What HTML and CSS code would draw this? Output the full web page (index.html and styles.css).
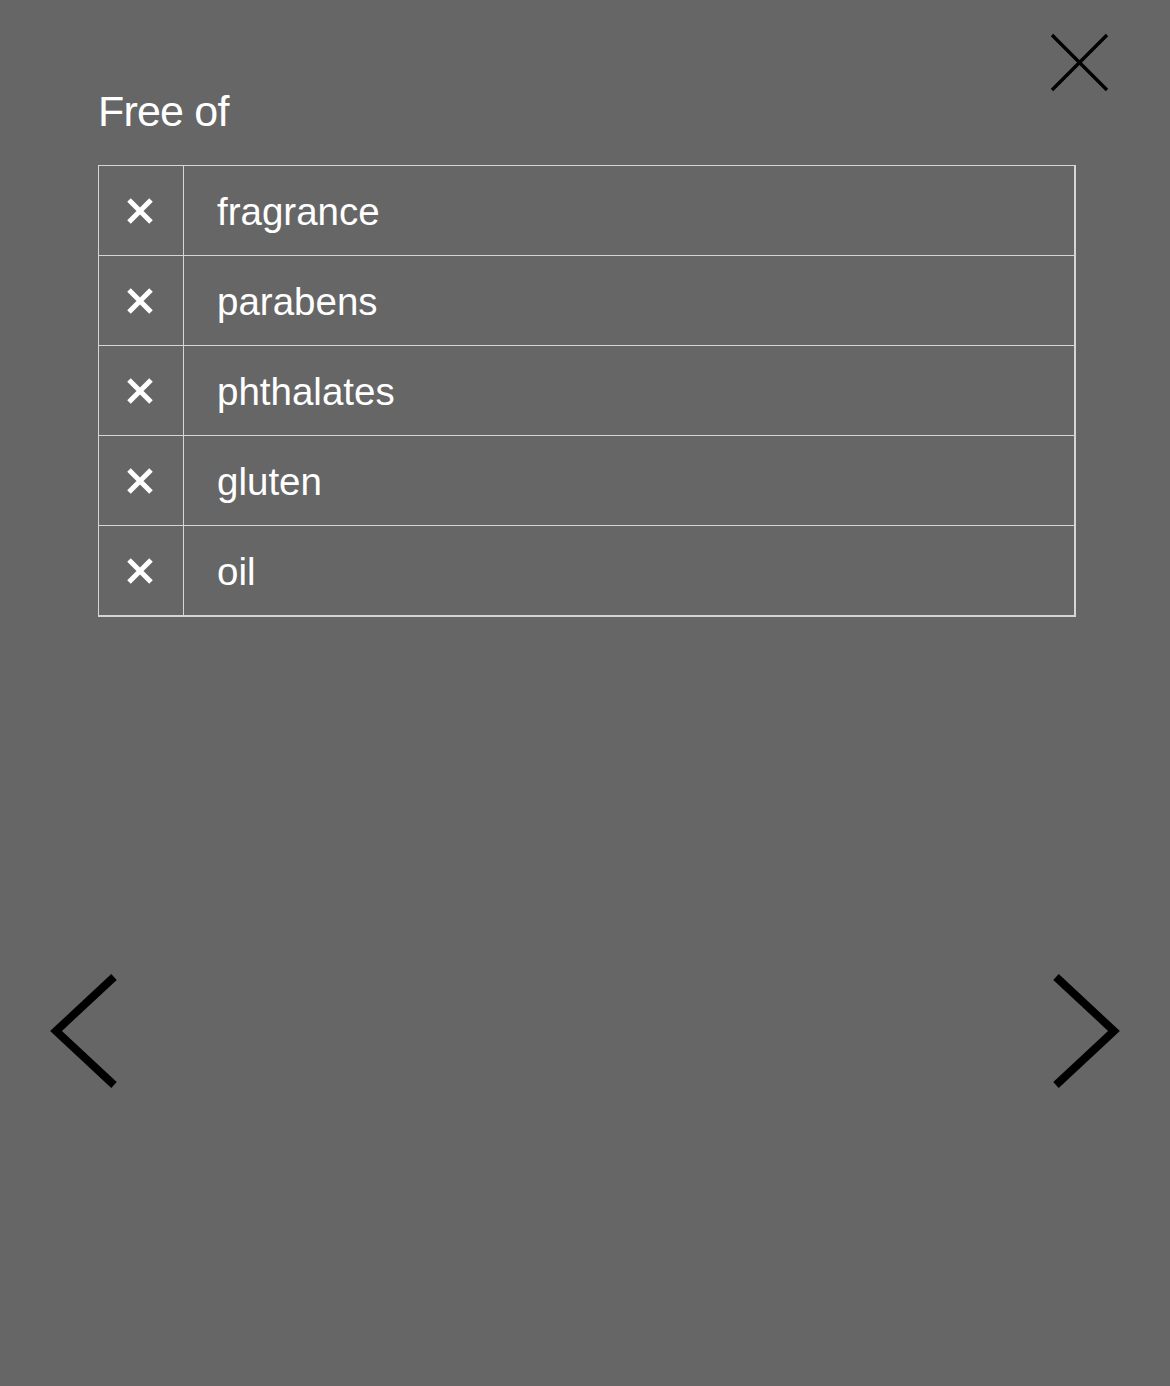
FILE: index.html
```html
<!DOCTYPE html>
<html lang="en">
<head>
<meta charset="utf-8">
<title>Free of</title>
<link rel="stylesheet" href="styles.css">
</head>
<body>
<div class="modal">
  <button class="close" aria-label="Close">
    <svg width="60" height="60" viewBox="0 0 60 60"><path d="M3 3 L58 58 M58 3 L3 58" stroke="#000" stroke-width="3.4" fill="none"/></svg>
  </button>
  <section class="content">
    <h2 class="title">Free of</h2>
    <div class="table">
      <div class="row"><div class="mark"><svg width="28" height="28" viewBox="0 0 28 28"><path d="M3 3 L25 25 M25 3 L3 25" stroke="#fff" stroke-width="5" fill="none"/></svg></div><div class="label">fragrance</div></div>
      <div class="row"><div class="mark"><svg width="28" height="28" viewBox="0 0 28 28"><path d="M3 3 L25 25 M25 3 L3 25" stroke="#fff" stroke-width="5" fill="none"/></svg></div><div class="label">parabens</div></div>
      <div class="row"><div class="mark"><svg width="28" height="28" viewBox="0 0 28 28"><path d="M3 3 L25 25 M25 3 L3 25" stroke="#fff" stroke-width="5" fill="none"/></svg></div><div class="label">phthalates</div></div>
      <div class="row"><div class="mark"><svg width="28" height="28" viewBox="0 0 28 28"><path d="M3 3 L25 25 M25 3 L3 25" stroke="#fff" stroke-width="5" fill="none"/></svg></div><div class="label">gluten</div></div>
      <div class="row"><div class="mark"><svg width="28" height="28" viewBox="0 0 28 28"><path d="M3 3 L25 25 M25 3 L3 25" stroke="#fff" stroke-width="5" fill="none"/></svg></div><div class="label">oil</div></div>
    </div>
  </section>
  <button class="nav prev" aria-label="Previous">
    <svg width="80" height="120" viewBox="0 0 80 120"><path d="M68 4 L10 58 L68 112" stroke="#000" stroke-width="8" fill="none" stroke-linejoin="miter"/></svg>
  </button>
  <button class="nav next" aria-label="Next">
    <svg width="80" height="120" viewBox="0 0 80 120"><path d="M6 4 L64 58 L6 112" stroke="#000" stroke-width="8" fill="none" stroke-linejoin="miter"/></svg>
  </button>
</div>
</body>
</html>
```
FILE: styles.css
```css
html, body {
  margin: 0;
  padding: 0;
  background: #666666;
}
body {
  font-family: "Liberation Sans", Arial, Helvetica, sans-serif;
  color: #ffffff;
}
.modal {
  position: relative;
  width: 1170px;
  height: 1386px;
  overflow: hidden;
}
.content {
  padding: 84px 95px 0 98px;
}
.title {
  margin: 0;
  font-weight: normal;
  font-size: 43px;
  letter-spacing: -0.8px;
  line-height: 54px;
  height: 54px;
}
.table {
  margin-top: 27px;
  width: 975px;
  border: 1px solid #d6d6d6;
  border-bottom-width: 2px;
  border-right-width: 2px;
}
.row {
  display: flex;
  height: 89px;
  border-top: 1px solid #d6d6d6;
}
.row:first-child {
  border-top: none;
}
.mark {
  width: 84px;
  flex: none;
  border-right: 1px solid #d6d6d6;
  display: flex;
  align-items: center;
  justify-content: center;
}
.mark svg {
  display: block;
  margin-right: 2px;
}
.label {
  display: flex;
  align-items: center;
  padding-left: 33px;
  padding-top: 2px;
  font-size: 38.5px;
}
button {
  background: none;
  border: none;
  padding: 0;
  margin: 0;
  cursor: pointer;
}
button svg {
  display: block;
}
.close {
  position: absolute;
  left: 1049px;
  top: 32px;
}
.nav {
  position: absolute;
  top: 973px;
}
.prev {
  left: 46px;
}
.next {
  left: 1050px;
}
```
